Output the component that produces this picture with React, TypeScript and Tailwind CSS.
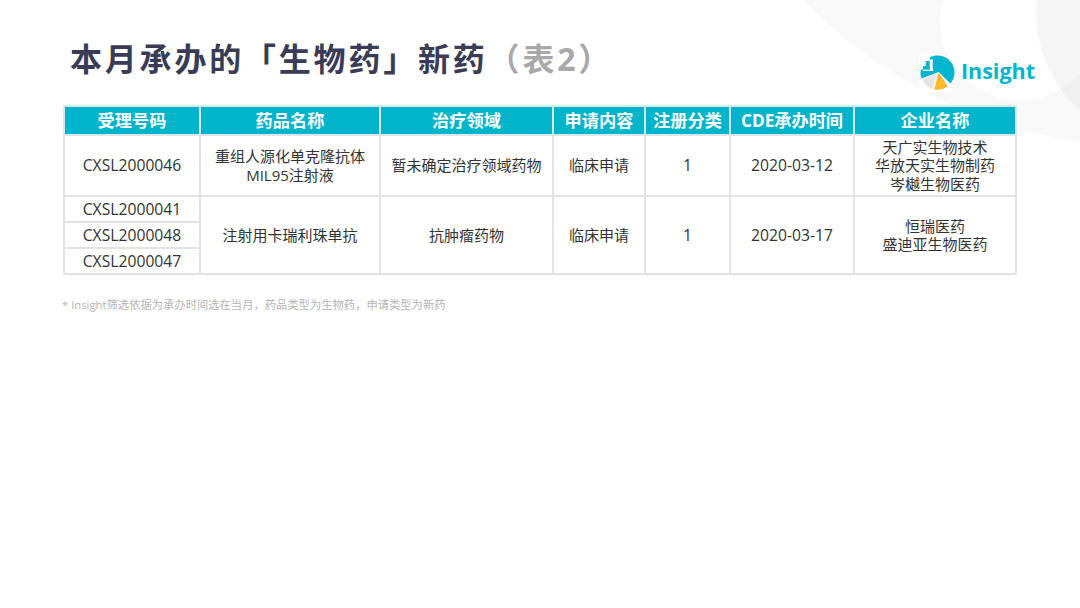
const font = { fontFamily: '"Open Sans", "Noto Sans CJK SC", sans-serif' };

const columns = [
  { label: "受理号码", width: "w-[136px]" },
  { label: "药品名称", width: "w-[180px]" },
  { label: "治疗领域", width: "w-[173px]" },
  { label: "申请内容", width: "w-[92px]" },
  { label: "注册分类", width: "w-[85px]" },
  { label: "CDE承办时间", width: "w-[124px]" },
  { label: "企业名称", width: "w-[162px]" },
];

const cell = "border-2 border-[#e3e3e3] text-center align-middle p-0";
const latin = "text-[15.7px]";

function Logo() {
  return (
    <svg width="42" height="42" viewBox="0 0 42 42" className="shrink-0">
      <circle cx="20.5" cy="22.5" r="17" fill="#00b5cd" />
      {/* chart slices */}
      <path d="M21.7 22 L2 29.5 V42 H34 L33.8 34 Z" fill="#fff" />
      <path d="M20 22.8 L5.5 30 A17 17 0 0 0 15.8 39 Z" fill="#e4e4e4" />
      <path d="M21.7 22.5 L17 40 L17.5 39.4 A17 17 0 0 0 30.8 36.5 Z" fill="#fdb92b" />
      {/* pixel steps */}
      <rect x="2" y="4" width="11" height="7" fill="#fff" />
      <rect x="2" y="11" width="6.7" height="8.5" fill="#fff" />
      <rect x="8" y="9.5" width="8" height="1.5" fill="#fff" />
      <rect x="12.7" y="10" width="3" height="11" fill="#fff" />
      <rect x="6" y="15.7" width="3" height="1" fill="#fff" />
      <rect x="6" y="19.5" width="10" height="1.4" fill="#fff" />
      <rect x="6" y="16" width="6.7" height="3.5" fill="#00b5cd" />
    </svg>
  );
}

export default function App() {
  return (
    <div
      className="relative w-[1080px] h-[608px] overflow-hidden bg-white text-[#333333]"
      style={font}
    >
      {/* background circles */}
      <div className="absolute left-[671px] top-[-807px] w-[954px] h-[954px] rounded-full bg-linear-to-r from-[#f9f9f9] from-70% to-[#f1f1f1] to-90%" />
      <div className="absolute left-[940px] top-[-60px] w-[160px] h-[160px] rounded-full bg-white" />
      <div className="absolute left-[1036px] top-[-122px] w-[268px] h-[268px] rounded-full bg-black/[0.035]" />

      <div className="relative flex flex-col pt-[38px] pl-[63px]">
        <div className="flex items-start justify-between h-[67px] pr-[45px]">
          <h1 className="-mt-px pl-[7px] text-[32px] leading-[44px] font-bold tracking-[2.8px] text-[#393c54]">
            本月承办的「生物药」新药
            <span className="text-[#a9a9a9]">（表2）</span>
          </h1>
          <div className="flex items-center gap-[2px] mt-[12px]">
            <Logo />
            <span className="text-[21.5px] leading-[36px] font-bold text-[#00b5cd]">Insight</span>
          </div>
        </div>

        <table className="w-[952px] table-fixed border-collapse bg-white text-[15px] leading-[18.5px]">
          <thead>
            <tr className="h-[29px] bg-[#00b4cb] text-white">
              {columns.map((col) => (
                <th
                  key={col.label}
                  className={`${col.width} border-2 border-[#d9e8ea] p-0 pt-[2px] text-center text-[17.2px] font-bold whitespace-nowrap`}
                >
                  {col.label}
                </th>
              ))}
            </tr>
          </thead>
          <tbody>
            <tr className="h-[61px]">
              <td className={`${cell} ${latin}`}>CXSL2000046</td>
              <td className={cell}>
                重组人源化单克隆抗体
                <br />
                MIL95注射液
              </td>
              <td className={cell}>暂未确定治疗领域药物</td>
              <td className={cell}>临床申请</td>
              <td className={`${cell} ${latin}`}>1</td>
              <td className={`${cell} ${latin}`}>2020-03-12</td>
              <td className={cell}>
                天广实生物技术
                <br />
                华放天实生物制药
                <br />
                岑樾生物医药
              </td>
            </tr>
            <tr className="h-[26px]">
              <td className={`${cell} ${latin}`}>CXSL2000041</td>
              <td className={cell} rowSpan={3}>注射用卡瑞利珠单抗</td>
              <td className={cell} rowSpan={3}>抗肿瘤药物</td>
              <td className={cell} rowSpan={3}>临床申请</td>
              <td className={`${cell} ${latin}`} rowSpan={3}>1</td>
              <td className={`${cell} ${latin}`} rowSpan={3}>2020-03-17</td>
              <td className={cell} rowSpan={3}>
                恒瑞医药
                <br />
                盛迪亚生物医药
              </td>
            </tr>
            <tr className="h-[26px]">
              <td className={`${cell} ${latin}`}>CXSL2000048</td>
            </tr>
            <tr className="h-[26px]">
              <td className={`${cell} ${latin}`}>CXSL2000047</td>
            </tr>
          </tbody>
        </table>

        <p className="mt-[22px] -ml-px text-[11.3px] leading-[16px] text-[#b4b4b4]">
          * Insight筛选依据为承办时间选在当月，药品类型为生物药，申请类型为新药
        </p>
      </div>
    </div>
  );
}
